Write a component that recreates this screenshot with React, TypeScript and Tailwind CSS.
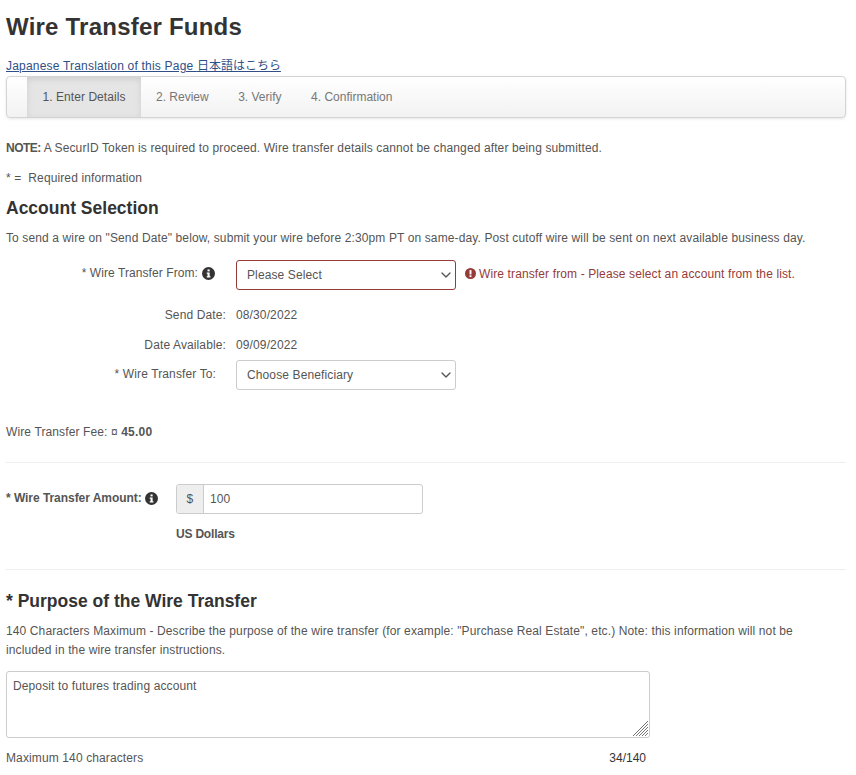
import { ChevronDown } from "lucide-react";

function InfoIcon() {
  return (
    <svg viewBox="0 0 16 16" className="w-[13px] h-[13px] shrink-0 inline-block">
      <circle cx="8" cy="8" r="8" fill="#333333" />
      <rect x="6.8" y="3" width="2.6" height="2.4" fill="#ffffff" />
      <path d="M5.8 6.8h3.6v4.6h1v1.4H5.8v-1.4h1V8.2h-1z" fill="#ffffff" />
    </svg>
  );
}

function AlertIcon() {
  return (
    <svg viewBox="0 0 16 16" className="w-[11px] h-[11px] shrink-0">
      <circle cx="8" cy="8" r="8" fill="#953b39" />
      <rect x="6.6" y="3" width="2.8" height="6.4" fill="#ffffff" />
      <rect x="6.6" y="10.6" width="2.8" height="2.6" fill="#ffffff" />
    </svg>
  );
}

function SelectBox({ text, error }: { text: string; error?: boolean }) {
  return (
    <div
      className={`w-[220px] h-[30px] flex items-center justify-between pl-[10px] pr-[1px] bg-white rounded-[3px] border ${
        error ? "border-[#953b39]" : "border-[#cccccc]"
      }`}
    >
      <span>{text}</span>
      <ChevronDown size={16} strokeWidth={2} className="text-[#555555]" />
    </div>
  );
}

const steps = ["2. Review", "3. Verify", "4. Confirmation"];

export default function App() {
  return (
    <div className="w-[856px] h-[775px] overflow-hidden bg-white pl-[6px] pr-[10px] text-[12px] leading-[20px] tracking-[0.12px] text-[#555555] font-['Liberation_Sans',Arial,sans-serif]">
      <h1 className="text-[24px] leading-[30px] font-bold tracking-[0.22px] text-[#333333] pt-[12px] h-[42px]">Wire Transfer Funds</h1>
      <a className="block mt-[13px] h-[20px] underline tracking-[0.2px] text-[#2f4f86]">
        Japanese Translation of this Page <span className="font-['Noto_Sans_CJK_JP',sans-serif] tracking-normal">日本語はこちら</span>
      </a>
      <div className="h-[42px] mt-[1px] flex border border-[#d4d4d4] rounded-[4px] pl-[20px] bg-gradient-to-b from-white to-[#f2f2f2] shadow-[0_1px_3px_rgba(0,0,0,0.1)] text-[#777777] tracking-normal">
        <div className="w-[114px] flex items-center justify-center bg-[#e5e5e5] shadow-[inset_0_2px_6px_rgba(0,0,0,0.1)] text-[#555555] tracking-[0.06px]">
          1. Enter Details
        </div>
        {steps.map((step) => (
          <div key={step} className="flex items-center pl-[15px] pr-[14.5px]">
            {step}
          </div>
        ))}
      </div>
      <p className="mt-[20px]">
        <strong className="font-bold tracking-[-0.5px]">NOTE:</strong> A SecurID Token is required to proceed. Wire transfer details cannot
        be changed after being submitted.
      </p>
      <p className="mt-[10px] whitespace-pre">*{" =  "}Required information</p>
      <h3 className="mt-[8px] text-[17.5px] leading-[24px] tracking-normal font-bold text-[#333333]">Account Selection</h3>
      <p className="mt-[8px]">
        To send a wire on "Send Date" below, submit your wire before 2:30pm PT on same-day. Post cutoff wire will be sent on
        next available business day.
      </p>
      <div className="mt-[12px] flex items-start h-[30px]">
        <div className="w-[209px] flex items-center justify-end gap-[4px] h-[26px] tracking-[0.08px]">
          <span>* Wire Transfer From:</span>
          <InfoIcon />
        </div>
        <div className="ml-[21px]">
          <SelectBox text="Please Select" error />
        </div>
        <div className="ml-[9px] flex items-center gap-[3px] h-[27px] text-[#953b39]">
          <AlertIcon />
          <span>Wire transfer from - Please select an account from the list.</span>
        </div>
      </div>
      <div className="mt-[15px] flex h-[20px]">
        <div className="w-[220px] text-right">Send Date:</div>
        <div className="ml-[10px]">08/30/2022</div>
      </div>
      <div className="mt-[10px] flex h-[20px]">
        <div className="w-[220px] text-right">Date Available:</div>
        <div className="ml-[10px]">09/09/2022</div>
      </div>
      <div className="mt-[5px] flex items-start h-[30px]">
        <div className="w-[210px] text-right leading-[28px]">* Wire Transfer To:</div>
        <div className="ml-[20px]">
          <SelectBox text="Choose Beneficiary" />
        </div>
      </div>
      <p className="mt-[32px]">
        Wire Transfer Fee: ¤ <strong className="font-bold tracking-[0.2px]">45.00</strong>
      </p>
      <hr className="mt-[20px] border-[#eeeeee]" />
      <div className="mt-[21px] flex items-start h-[30px]">
        <div className="w-[170px] flex items-center gap-[3px] h-[28px] font-bold tracking-[-0.05px]">
          <span>* Wire Transfer Amount:</span>
          <InfoIcon />
        </div>
        <div className="w-[247px] h-[30px] flex border border-[#cccccc] rounded-[3px]">
          <div className="w-[27px] flex items-center justify-center bg-[#eeeeee] border-r border-[#cccccc] rounded-l-[3px]">$</div>
          <div className="flex items-center pl-[6px]">100</div>
        </div>
      </div>
      <div className="mt-[10px] ml-[170px] font-bold tracking-[-0.2px]">US Dollars</div>
      <hr className="mt-[25px] border-[#eeeeee]" />
      <h3 className="mt-[19px] text-[17.5px] leading-[24px] tracking-normal font-bold text-[#333333]">* Purpose of the Wire Transfer</h3>
      <p className="mt-[9px] leading-[19px]">
        140 Characters Maximum - Describe the purpose of the wire transfer (for example: "Purchase Real Estate", etc.) Note:
        this information will not be
        <br />
        included in the wire transfer instructions.
      </p>
      <div className="relative mt-[11px] w-[644px] h-[67px] border border-[#cccccc] rounded-[3px] px-[6px] pt-[4px]">
        Deposit to futures trading account
        <svg viewBox="0 0 15 15" className="absolute right-[1px] bottom-[1px] w-[15px] h-[15px]" stroke="#777777" strokeWidth="1">
          <path d="M0 15L15 0M3 15L15 3M6 15L15 6M9 15L15 9M12 15L15 12" />
        </svg>
      </div>
      <div className="mt-[10px] w-[640px] flex justify-between">
        <span>Maximum 140 characters</span>
        <span className="text-[#333333] tracking-normal">34/140</span>
      </div>
    </div>
  );
}
